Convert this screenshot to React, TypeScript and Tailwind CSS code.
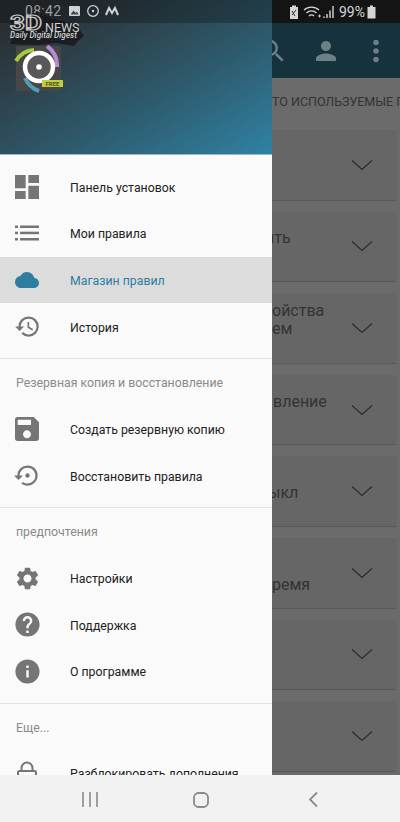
import {
  MdCloud,
  MdDashboard,
  MdHelp,
  MdHistory,
  MdInfo,
  MdMoreVert,
  MdPerson,
  MdSave,
  MdSearch,
  MdSettings,
  MdSettingsBackupRestore,
} from "react-icons/md";

const cards = [
  { text: "", boxClass: "" },
  { text: "ить", boxClass: "pl-[261px] -mt-4" },
  { text: "ойства\nем", boxClass: "pl-[268px] -mt-4" },
  { text: "вление", boxClass: "pl-[269px] -mt-4" },
  { text: "ыкл", boxClass: "pl-[264px] mt-1" },
  { text: "ремя", boxClass: "pl-[268px] mt-6" },
  { text: "", boxClass: "" },
  { text: "", boxClass: "" },
];

function Chevron() {
  return (
    <svg width="22" height="12" viewBox="0 0 22 12" className="absolute left-[347px] top-1/2 -translate-y-1/2">
      <path d="M1 1.5 L11 10.5 L21 1.5" fill="none" stroke="#2c2c2c" strokeWidth="1.2" />
    </svg>
  );
}

function ListIcon() {
  return (
    <svg width="24" height="18" viewBox="0 0 24 18" fill="#757575">
      <rect x="0" y="1.5" width="3" height="2.5" />
      <rect x="0" y="7.7" width="3" height="2.5" />
      <rect x="0" y="14" width="3" height="2.5" />
      <rect x="5" y="1.5" width="19" height="2.5" />
      <rect x="5" y="7.7" width="19" height="2.5" />
      <rect x="5" y="14" width="19" height="2.5" />
    </svg>
  );
}

function LockIcon() {
  return (
    <svg width="24" height="28" viewBox="0 0 24 28" fill="none" stroke="#757575" strokeWidth="2">
      <path d="M6.5 11 V8 A 5.5 5.5 0 0 1 17.5 8 V11" />
      <rect x="3" y="11" width="18" height="14" rx="1.5" />
      <circle cx="12" cy="18" r="1.5" fill="#757575" stroke="none" />
    </svg>
  );
}

function Row({ icon, label, active }: any) {
  return (
    <div className={`flex h-[46.67px] items-center pl-[11px] ${active ? "bg-[#dcdcdc]" : ""}`}>
      <span
        className={`mr-[27px] flex w-[32px] shrink-0 justify-center ${active ? "text-[#2e7d9f]" : "text-[#757575]"}`}
      >
        {icon}
      </span>
      <span className={`pt-[2px] text-[12.3px] whitespace-nowrap ${active ? "text-[#2e7d9f]" : "text-[#212121]"}`}>
        {label}
      </span>
    </div>
  );
}

function Heading({ children }: any) {
  return (
    <div className="flex h-[46.67px] items-center pt-[2px] pl-4 text-[12.3px] text-[#8a8a8a] whitespace-nowrap">
      {children}
    </div>
  );
}

function Separator() {
  return <div className="mt-2 h-px bg-[#e2e2e2]" />;
}

function Logo() {
  return (
    <svg width="50" height="48" viewBox="0 0 50 48">
      <rect x="2" y="1" width="45" height="45" rx="2" fill="#474747" />
      <path d="M2 16 A 22 22 0 0 1 20 5" fill="none" stroke="#a4cf3a" strokeWidth="4" />
      <path d="M33 1 A 24 24 0 0 1 43 22" fill="none" stroke="#b98ad6" strokeWidth="4" />
      <path d="M11 33 A 24 24 0 0 0 25 46" fill="none" stroke="#4f9dbd" strokeWidth="4" />
      <circle cx="25" cy="22" r="14" fill="#585858" stroke="#ffffff" strokeWidth="4.5" />
      <circle cx="25" cy="22" r="2.8" fill="#ffffff" />
      <rect x="28" y="35" width="21" height="7" fill="#c3d03a" />
      <text x="38.5" y="41" textAnchor="middle" fontSize="6" fontWeight="700" fill="#4b5320" fontFamily="Roboto, sans-serif">
        FREE
      </text>
    </svg>
  );
}

function Watermark() {
  return (
    <div className="absolute left-[6px] top-[8px] h-[42px] w-[80px]">
      <svg width="80" height="42" viewBox="0 0 80 42" className="absolute inset-0">
        <path d="M4 10 L34 4 L44 10 L70 16 L78 28 L72 33 L68 38 L50 35 L30 37 L4 36 L8 24 Z" fill="#16181a" opacity="0.8" />
      </svg>
      <span className="absolute left-[4px] top-[5px] origin-left scale-x-[1.3] text-[20px] leading-[20px] font-bold text-transparent [-webkit-text-stroke:1.2px_#c4c4c4]">
        3D
      </span>
      <span className="absolute left-[39px] top-[13px] text-[12.5px] leading-[14px] text-[#cfcfcf]">NEWS</span>
      <span className="absolute left-[4px] top-[22px] text-[8.2px] leading-[10px] italic font-medium text-[#d0d0d0] whitespace-nowrap">
        Daily Digital Digest
      </span>
    </div>
  );
}

export default function App() {
  return (
    <div className="relative flex h-[822px] w-[400px] flex-col overflow-hidden font-['Roboto',sans-serif]">
      <div className="relative flex-1 overflow-hidden bg-[#6b6b6b]">
        {/* dimmed page behind the drawer */}
        <div className="h-[23px] bg-[#141414]" />
        <div className="flex h-[55px] items-center bg-[#15323d] pl-[258px] text-[#6f7f86]">
          <MdSearch size={30} />
          <MdPerson size={30} className="ml-[23px]" />
          <MdMoreVert size={34} className="ml-[18px]" />
        </div>
        <div className="flex h-[52px] items-center overflow-hidden pb-[4px] pl-[272px] text-[12.5px] whitespace-nowrap text-[#333333]">
          ТО ИСПОЛЬЗУЕМЫЕ ПРАВИЛА
        </div>
        <div className="flex flex-col gap-[12px] px-1">
          {cards.map((card, i) => (
            <div key={i} className="relative flex h-[69.6px] items-center bg-[#666666] shadow-[0_1px_1px_#5a5a5a]">
              <div className={`text-[16px] leading-[18px] whitespace-pre text-[#333333] ${card.boxClass}`}>
                {card.text}
              </div>
              <Chevron />
            </div>
          ))}
        </div>

        {/* drawer */}
        <div className="absolute top-0 bottom-0 left-0 w-[272px] bg-[#fafafa]">
          <div className="h-[155px] border-b border-[#9fb6c0] bg-gradient-to-br from-[#2a2f33] from-10% via-[#2d5a6c] via-60% to-[#2f82a4]">
            <div className="h-[23px] bg-black/25" />
            <div className="pt-[22px] pl-[14px]">
              <Logo />
            </div>
          </div>
          <div className="pt-[8.5px]">
            <Row icon={<MdDashboard size={32} />} label="Панель установок" />
            <Row icon={<ListIcon />} label="Мои правила" />
            <Row icon={<MdCloud size={24} />} label="Магазин правил" active />
            <Row icon={<MdHistory size={27} />} label="История" />
            <Separator />
            <Heading>Резервная копия и восстановление</Heading>
            <Row icon={<MdSave size={32} />} label="Создать резервную копию" />
            <Row icon={<MdSettingsBackupRestore size={27} />} label="Восстановить правила" />
            <Separator />
            <Heading>предпочтения</Heading>
            <Row icon={<MdSettings size={27} />} label="Настройки" />
            <Row icon={<MdHelp size={29} />} label="Поддержка" />
            <Row icon={<MdInfo size={29} />} label="О программе" />
            <Separator />
            <Heading>Еще...</Heading>
            <Row icon={<LockIcon />} label="Разблокировать дополнения" />
          </div>
        </div>
      </div>

      {/* system nav */}
      <div className="flex h-[47px] shrink-0 items-center bg-[#f2f2f2]">
        <svg width="400" height="47" viewBox="0 0 400 47">
          <path d="M83 17 V32 M90 17 V32 M97 17 V32" stroke="#8a8a8a" strokeWidth="1.6" fill="none" />
          <rect x="194" y="18" width="14" height="14" rx="4.5" stroke="#8a8a8a" strokeWidth="1.8" fill="none" />
          <path d="M317 17.5 L310 24.5 L317 31.5" stroke="#8a8a8a" strokeWidth="1.8" fill="none" />
        </svg>
      </div>

      {/* status bar */}
      <div className="absolute top-0 left-0 flex h-[23px] w-full items-center pr-[24px] pl-[25px]">
        <span className="text-[14px] tracking-[0.3px] text-[#9a9fa2]">08:42</span>
        <svg width="56" height="14" viewBox="0 0 56 14" className="ml-[7px]">
          <rect x="1" y="1" width="11" height="10" rx="1" fill="#d0d4d6" />
          <path d="M2.5 9.5 L5.5 5.5 L7.5 8 L9 6.5 L10.5 9.5 Z" fill="#3a4a50" />
          <circle cx="25" cy="6" r="5.3" fill="none" stroke="#d0d4d6" strokeWidth="1.3" />
          <circle cx="25" cy="6" r="1.2" fill="#d0d4d6" />
          <path d="M38 10 L41 3 L44 8 L47 3 L50 10" fill="none" stroke="#d0d4d6" strokeWidth="2" />
        </svg>
        <div className="ml-auto flex items-center gap-[2px]">
          <svg width="48" height="16" viewBox="0 0 48 16">
            <path d="M2 3 H4 V1.5 H8 V3 H10 V15 H2 Z" fill="#d5d5d5" />
            <path d="M4 11 L8 6 M4 7 L7 12" stroke="#333" strokeWidth="1" />
            <path d="M16 6 A 11 11 0 0 1 31 6 M18.5 9 A 7 7 0 0 1 28.5 9 M21 12 A 3.5 3.5 0 0 1 26 12" fill="none" stroke="#d5d5d5" strokeWidth="1.3" />
            <path d="M30 12 H33 M31.5 10.5 V13.5" stroke="#d5d5d5" strokeWidth="0.9" />
            <path d="M36 14 V12.5 M39 14 V10 M42 14 V6.5 M45 14 V2" stroke="#d5d5d5" strokeWidth="1.4" />
          </svg>
          <span className="ml-px text-[14px] leading-[18px] text-[#d5d5d5]">99%</span>
          <svg width="9" height="14" viewBox="0 0 9 14">
            <path d="M0.5 2 H3 V0.5 H6 V2 H8.5 V13.5 H0.5 Z" fill="#d5d5d5" />
          </svg>
        </div>
      </div>
      <Watermark />
    </div>
  );
}
